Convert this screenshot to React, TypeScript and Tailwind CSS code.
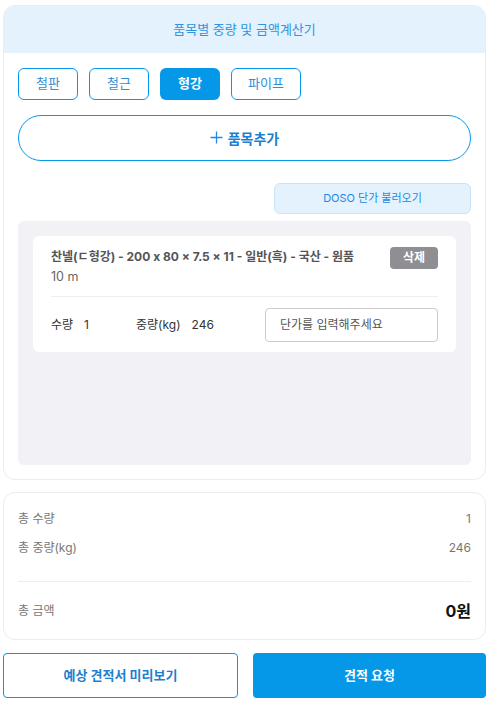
import React from "react";

const font = { fontFamily: 'Inter, "Noto Sans CJK KR", sans-serif' };

export default function App() {
  const tabs = ["철판", "철근", "형강", "파이프"];
  return (
    <div className="w-[491px] h-[723px] bg-white pl-[3px] pr-[5px] pt-[5px] text-[#333]" style={font}>
      {/* Main card */}
      <div className="w-[483px] rounded-[12px] border border-[#ececec] overflow-hidden bg-white">
        <div className="h-[47px] bg-[#e3f2fd] flex items-center justify-center text-[13px] text-[#2f95e0]">
          품목별 중량 및 금액계산기
        </div>
        <div className="px-[14px] pt-[15px] pb-[14px]">
          <div className="flex gap-[11px]">
            {tabs.map((t, i) =>
              i === 2 ? (
                <div
                  key={t}
                  className="w-[60px] h-[32px] rounded-[6px] bg-[#0598e9] text-white font-bold text-[13px] flex items-center justify-center"
                >
                  {t}
                </div>
              ) : (
                <div
                  key={t}
                  className={`${i === 3 ? "w-[70px]" : "w-[60px]"} h-[32px] rounded-[6px] border border-[#0598e9] text-[#2d8fd8] text-[13px] flex items-center justify-center`}
                >
                  {t}
                </div>
              )
            )}
          </div>
          <div className="mt-[15px] h-[46px] rounded-full border border-[#0598e9] flex items-center justify-center text-[#1c7fd0] font-bold text-[14px] gap-[5px]">
            <svg width="13" height="13" viewBox="0 0 13 13" className="-mt-[1px]">
              <path d="M6.5 0.5V12.5M0.5 6.5H12.5" stroke="#1e88e5" strokeWidth="1.3" fill="none" />
            </svg>
            <span>품목추가</span>
          </div>
          <div className="mt-[22px] flex justify-end">
            <div className="w-[197px] h-[31px] rounded-[6px] bg-[#e3f2fd] border border-[#c8e4f8] flex items-center justify-center text-[11px] text-[#1e88e5]">
              DOSO 단가 불러오기
            </div>
          </div>
          <div className="mt-[7px] h-[244px] rounded-[6px] bg-[#f2f2f6] p-[15px]">
            <div className="bg-white rounded-[6px] h-[116px] px-[18px] pt-[11px]">
              <div className="flex justify-between items-start">
                <div>
                  <div className="text-[12px] font-bold text-[#555] leading-[20px]">
                    찬넬(ㄷ형강) - 200 x 80 × 7.5 × 11 - 일반(흑) - 국산 - 원품
                  </div>
                  <div className="text-[12.5px] text-[#666] leading-[20px]">10 m</div>
                </div>
                <div className="w-[48px] h-[22px] rounded-[4px] bg-[#8e8e93] text-white text-[12px] font-bold flex items-center justify-center">
                  삭제
                </div>
              </div>
              <div className="mt-[9px] border-t border-[#eeeeee]" />
              <div className="mt-[11px] flex items-center">
                <div className="flex items-center text-[12px] text-[#333] w-[85px]">
                  <span>수량</span>
                  <span className="ml-[11px]">1</span>
                </div>
                <div className="flex items-center text-[12px] text-[#333] w-[129px]">
                  <span>중량(kg)</span>
                  <span className="ml-[11px]">246</span>
                </div>
                <div className="w-[173px] h-[34px] rounded-[4px] border border-[#cccccc] flex items-center pl-[14px] text-[12px] text-[#555]">
                  단가를 입력해주세요
                </div>
              </div>
            </div>
          </div>
        </div>
      </div>

      {/* Summary card */}
      <div className="mt-[12px] w-[483px] h-[148px] rounded-[12px] border border-[#ececec] px-[14px] pt-[17px] bg-white">
        <div className="flex justify-between text-[12px] text-[#777] leading-[18px]">
          <span>총 수량</span>
          <span>1</span>
        </div>
        <div className="mt-[11px] flex justify-between text-[12px] text-[#777] leading-[18px]">
          <span>총 중량(kg)</span>
          <span>246</span>
        </div>
        <div className="mt-[24px] border-t border-[#eeeeee]" />
        <div className="mt-[17px] flex justify-between items-center">
          <span className="text-[12px] text-[#777]">총 금액</span>
          <span className="text-[16px] font-bold text-[#111]">0원</span>
        </div>
      </div>

      {/* Buttons */}
      <div className="mt-[13px] flex justify-between">
        <div className="w-[235px] h-[45px] rounded-[4px] border border-[#0598e9] flex items-center justify-center text-[#1c7fd0] font-bold text-[13px]">
          예상 견적서 미리보기
        </div>
        <div className="w-[233px] h-[45px] rounded-[4px] bg-[#0598e9] flex items-center justify-center text-white font-bold text-[13px]">
          견적 요청
        </div>
      </div>
    </div>
  );
}
